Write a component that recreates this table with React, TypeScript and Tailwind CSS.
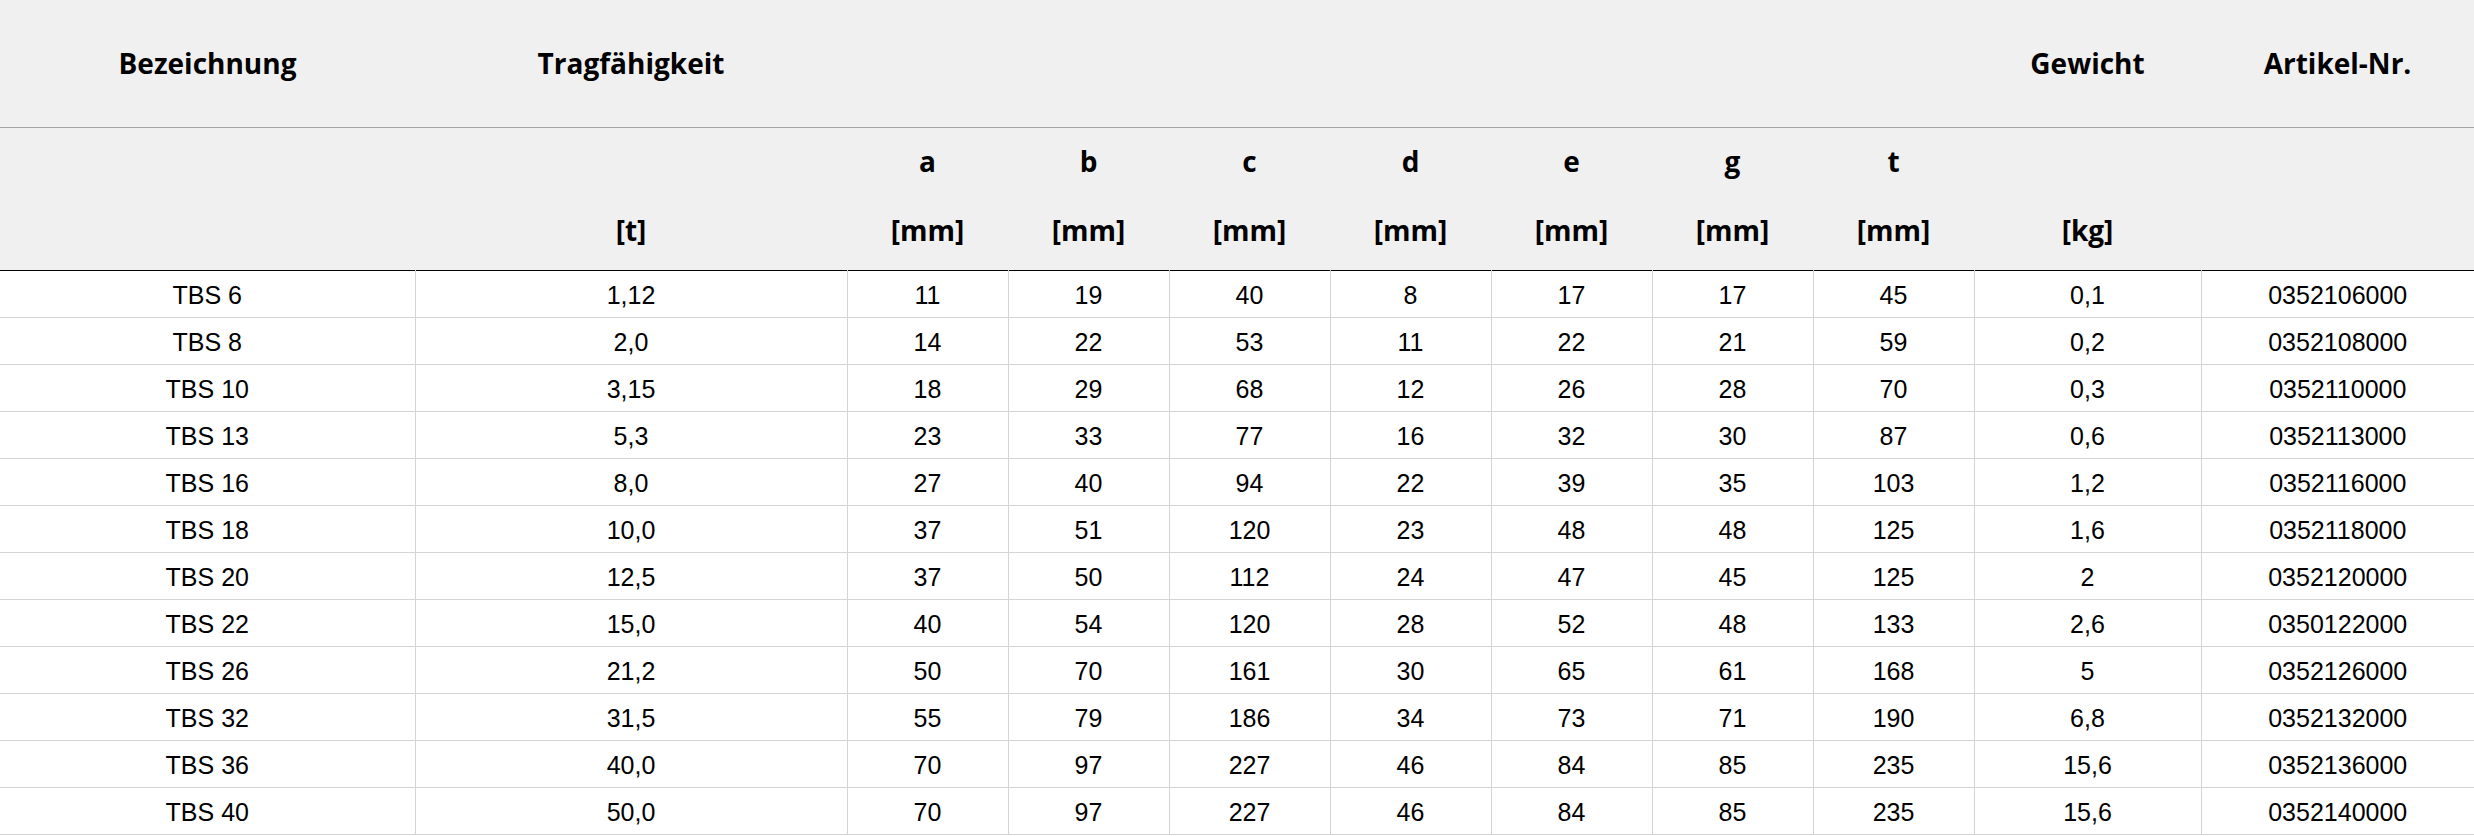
const rows: string[][] = [
  ['TBS 6', '1,12', '11', '19', '40', '8', '17', '17', '45', '0,1', '0352106000'],
  ['TBS 8', '2,0', '14', '22', '53', '11', '22', '21', '59', '0,2', '0352108000'],
  ['TBS 10', '3,15', '18', '29', '68', '12', '26', '28', '70', '0,3', '0352110000'],
  ['TBS 13', '5,3', '23', '33', '77', '16', '32', '30', '87', '0,6', '0352113000'],
  ['TBS 16', '8,0', '27', '40', '94', '22', '39', '35', '103', '1,2', '0352116000'],
  ['TBS 18', '10,0', '37', '51', '120', '23', '48', '48', '125', '1,6', '0352118000'],
  ['TBS 20', '12,5', '37', '50', '112', '24', '47', '45', '125', '2', '0352120000'],
  ['TBS 22', '15,0', '40', '54', '120', '28', '52', '48', '133', '2,6', '0350122000'],
  ['TBS 26', '21,2', '50', '70', '161', '30', '65', '61', '168', '5', '0352126000'],
  ['TBS 32', '31,5', '55', '79', '186', '34', '73', '71', '190', '6,8', '0352132000'],
  ['TBS 36', '40,0', '70', '97', '227', '46', '84', '85', '235', '15,6', '0352136000'],
  ['TBS 40', '50,0', '70', '97', '227', '46', '84', '85', '235', '15,6', '0352140000'],
]

const widths = ['w-[415px]', 'w-[432px]', 'w-[161px]', 'w-[161px]', 'w-[161px]', 'w-[161px]', 'w-[161px]', 'w-[161px]', 'w-[161px]', 'w-[227px]', 'w-[273px]']

const letters = ['', '', 'a', 'b', 'c', 'd', 'e', 'g', 't', '', '']
const units = ['', '[t]', '[mm]', '[mm]', '[mm]', '[mm]', '[mm]', '[mm]', '[mm]', '[kg]', '']
const titles = ['Bezeichnung', 'Tragfähigkeit', '', '', '', '', '', '', '', 'Gewicht', 'Artikel-Nr.']

export default function App() {
  return (
    <div className="w-[2474px] h-[836px] overflow-hidden bg-white">
      <table className="table-fixed border-collapse w-[2474px] text-black">
        <colgroup>
          {widths.map((w, i) => (
            <col key={i} className={w} />
          ))}
        </colgroup>
        <thead className="bg-[#f0f0f0] font-['Open_Sans',sans-serif] font-bold text-[28px]">
          <tr className="border-b border-[#a3a3a3]">
            {titles.map((t, i) => (
              <th key={i} className="h-[127px] p-0 text-center align-middle font-bold">
                {t}
              </th>
            ))}
          </tr>
          <tr>
            {letters.map((t, i) => (
              <th key={i} className="h-[70px] p-0 pb-[3px] text-center align-middle font-bold">
                {t}
              </th>
            ))}
          </tr>
          <tr className="border-b border-black">
            {units.map((t, i) => (
              <th key={i} className="h-[73px] p-0 pb-[6px] text-center align-middle font-bold">
                {t}
              </th>
            ))}
          </tr>
        </thead>
        <tbody className="font-['Liberation_Sans',Arial,sans-serif] text-[25px]">
          {rows.map((r, ri) => (
            <tr key={ri} className="border-b border-[#d4d4d4]">
              {r.map((v, ci) => (
                <td
                  key={ci}
                  className={`h-[47px] p-0 pt-[4px] text-center align-middle leading-none ${ci > 0 ? 'border-l border-[#d4d4d4]' : ''}`}
                >
                  {v}
                </td>
              ))}
            </tr>
          ))}
        </tbody>
      </table>
    </div>
  )
}
